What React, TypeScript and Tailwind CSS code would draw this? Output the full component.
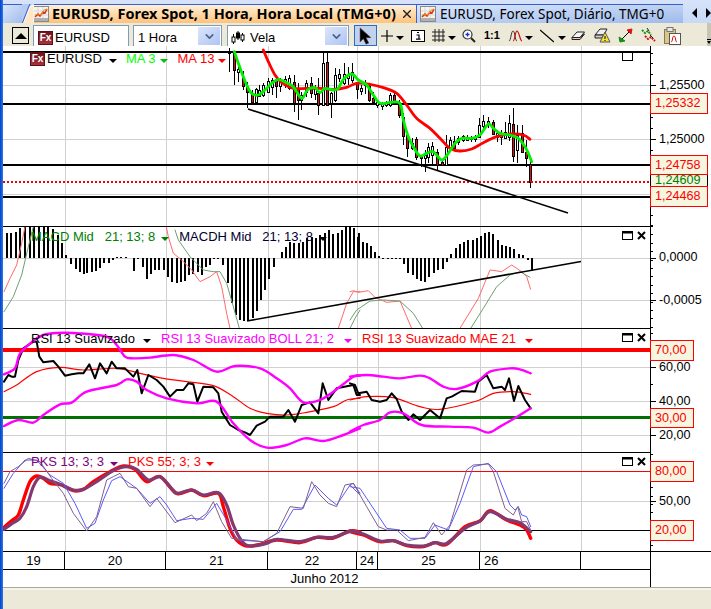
import { ChevronDown } from "lucide-react";

// zoom crop coordinates -> page coordinates
const toPts = (ox: number, oy: number, s: string) =>
  s
    .split(" ")
    .map((p) => {
      const [a, b] = p.split(",");
      return `${ox + Number(a) / 3},${oy + Number(b) / 3}`;
    })
    .join(" ");

const pairs = (ox: number, oy: number, s: string) =>
  s.split(" ").map((p) => {
    const [a, b] = p.split(",");
    return [ox + Number(a) / 3, oy + Number(b) / 3];
  });

// polyline points -> rounded path, for the moving averages
const smooth = (p: string) => {
  const a = p.split(" ").map((s) => s.split(",").map(Number));
  let d = `M${a[0][0]} ${a[0][1]}`;
  for (let i = 0; i < a.length - 1; i++) {
    const p0 = a[i - 1] || a[i];
    const p1 = a[i];
    const p2 = a[i + 1];
    const p3 = a[i + 2] || p2;
    d += ` C${p1[0] + (p2[0] - p0[0]) / 6} ${p1[1] + (p2[1] - p0[1]) / 6} ${p2[0] - (p3[0] - p1[0]) / 6} ${p2[1] - (p3[1] - p1[1]) / 6} ${p2[0]} ${p2[1]}`;
  }
  return d;
};

// x, high, low, body top, body bottom, red
const candles: [number, number, number, number, number, number][] = [
  [229, 48, 72, 52, 53, 0], [234, 52, 85, 52, 70, 1], [238, 63, 82, 69, 72, 0], [243, 71, 90, 78, 86, 1],
  [247, 82, 108, 86, 92, 1], [252, 90, 103, 93, 102, 1], [256, 88, 103, 89, 102, 0], [259, 85, 97, 90, 96, 0],
  [263, 83, 97, 85, 95, 0], [268, 78, 93, 81, 92, 0], [272, 78, 95, 80, 87, 0], [276, 77, 98, 80, 86, 1],
  [280, 78, 92, 80, 86, 0], [285, 76, 88, 79, 85, 0], [289, 75, 90, 78, 88, 0], [294, 75, 112, 82, 103, 1],
  [298, 83, 120, 88, 100, 1], [301, 92, 110, 95, 100, 0], [306, 80, 97, 83, 92, 0], [311, 77, 98, 83, 93, 1],
  [315, 85, 100, 87, 94, 0], [318, 78, 115, 93, 105, 1], [323, 53, 105, 63, 105, 0], [327, 53, 105, 62, 105, 1],
  [331, 92, 118, 93, 103, 0], [335, 68, 102, 75, 100, 0], [339, 69, 82, 74, 78, 0], [344, 63, 85, 74, 83, 0],
  [348, 67, 85, 74, 78, 0], [352, 63, 83, 72, 80, 0], [357, 82, 99, 83, 89, 1], [361, 85, 95, 88, 91, 0],
  [365, 80, 94, 83, 85, 0], [369, 85, 102, 86, 100, 1], [373, 92, 103, 98, 102, 1], [377, 100, 108, 102, 105, 0],
  [382, 102, 110, 104, 106, 0], [386, 101, 107, 103, 105, 0], [390, 93, 107, 95, 105, 0], [394, 92, 103, 95, 102, 1],
  [399, 100, 118, 102, 115, 1], [403, 113, 145, 117, 136, 1], [407, 133, 157, 135, 148, 1], [412, 138, 150, 143, 148, 0],
  [416, 137, 160, 139, 157, 1], [421, 155, 167, 156, 158, 1], [425, 150, 172, 155, 158, 0], [428, 143, 163, 147, 157, 0],
  [432, 142, 165, 146, 155, 0], [437, 149, 171, 152, 165, 1], [442, 160, 165, 162, 165, 1], [446, 135, 165, 147, 165, 0],
  [450, 137, 150, 140, 147, 0], [454, 136, 150, 141, 148, 1], [458, 136, 145, 138, 142, 0], [463, 135, 142, 136, 140, 0],
  [467, 135, 141, 137, 140, 0], [471, 136, 142, 138, 139, 0], [475, 135, 142, 137, 139, 0], [479, 118, 138, 125, 137, 0],
  [483, 115, 130, 121, 126, 0], [488, 117, 128, 121, 124, 0], [493, 120, 135, 122, 134, 1], [497, 130, 142, 133, 137, 0],
  [501, 130, 145, 133, 137, 0], [505, 122, 139, 132, 138, 0], [509, 115, 141, 123, 137, 0], [513, 108, 162, 124, 156, 1],
  [517, 125, 163, 135, 150, 0], [522, 125, 152, 133, 152, 1], [526, 140, 167, 152, 158, 1], [530, 158, 188, 164, 182, 1],
];

const maGreen = toPts(200, 50, "103,5 115,40 128,75 140,105 155,130 175,135 195,120 215,100 235,88 260,98 280,110 305,145 322,120 345,113 360,128 375,115 400,120 415,115 430,88 455,72 475,90 500,105 520,135 540,160 570,157 600,160 610,210 625,260 640,290 660,318 680,310 700,305 725,330 745,310 765,280 785,265 815,265 840,255 865,222 880,235 900,250 930,255 955,265 975,290 985,310 995,335");
const maRed = toPts(200, 50, "190,0 205,35 225,75 245,98 280,115 320,115 360,115 400,118 440,112 470,100 510,103 550,113 590,130 620,165 650,205 690,235 720,265 750,295 780,303 815,297 850,278 890,260 930,252 970,255 990,268");

const macdBars = [
  ...pairs(0, 220, "17,40 31,38 45,35 58,25 72,20 86,20 100,20 114,20 128,20 142,20 156,28 170,45 183,70 195,105 210,132 224,148 238,155 248,162 258,158 272,155 285,152 298,145 310,130 323,128 337,120 347,110 360,112 375,110 398,152 412,118 425,140 438,177 450,162 463,150 475,150 488,150 502,172 514,185 527,188 540,185 552,183 565,165 577,162 590,155 603,165 615,140 628,135 640,118 652,115 665,135 680,190 692,250 705,285 718,300 730,303 742,303 755,295 768,272 780,240 792,210 805,178 818,140 843,95 855,80 868,65 880,68 893,70 905,65 918,55 932,50 945,55 958,45 972,40 985,30 997,42 1010,38 1022,30 1035,22 1048,22 1060,25 1073,40"),
  ...pairs(350, 220, "10,25 22,50 35,65 47,68 60,78 72,95 85,108 97,118 110,118 122,115 135,115 148,115 160,133 172,158 185,165 198,178 210,182 223,185 235,170 248,160 262,150 275,147 288,125 300,102 315,85 327,73 340,65 352,60 365,60 378,55 390,48 402,38 414,35 427,42 440,60 452,75 465,78 478,80 490,88 503,102 515,105 530,120 543,152"),
];

const macdLines = [
  { c: "#ff6a6a", p: toPts(0, 220, "12,215 30,175 50,135 65,70 75,20 80,0") },
  { c: "#6f9f72", p: toPts(0, 220, "12,275 40,230 65,165 85,80 100,20 105,0") },
  { c: "#ff6a6a", p: toPts(0, 220, "495,0 505,50 520,100 545,120 575,150 600,185 630,170 650,155 665,200 680,280 690,325") },
  { c: "#6f9f72", p: toPts(0, 220, "525,30 535,60 570,110 610,150 640,155 660,155 680,190 700,260 718,325") },
  { c: "#ff6a6a", p: toPts(0, 220, "1015,325 1040,250 1060,215 1080,215") },
  { c: "#6f9f72", p: toPts(0, 220, "1050,325 1065,295 1080,270") },
  { c: "#ff6a6a", p: toPts(350, 220, "0,215 10,212 25,217 55,212 75,232 110,247 150,243 170,290 185,325") },
  { c: "#6f9f72", p: toPts(350, 220, "0,300 20,270 60,243 100,240 150,243 190,280 218,325") },
  { c: "#ff6a6a", p: toPts(350, 220, "330,325 385,235 420,150 435,152 455,155 485,135 515,155 530,170 542,208") },
  { c: "#6f9f72", p: toPts(350, 220, "362,325 400,265 440,200 480,165 510,155 540,172") },
];

const rsiBlack = toPts(0, 325, "12,170 25,150 35,155 45,155 55,105 70,70 100,50 110,50 118,95 130,112 160,108 175,125 195,152 215,148 235,145 250,145 268,118 285,160 300,115 320,145 335,110 350,130 375,130 400,155 412,135 425,205 445,150 470,165 490,185 510,215 530,195 550,195 565,175 580,178 592,230 610,185 640,187 655,205 665,260 690,300 715,315 735,322 750,330 770,302 795,290 810,275 850,275 865,255 885,290 905,240 930,232 955,265 968,175 985,225 1010,190 1060,180 1070,210 1080,210");
const rsiBlack2 = toPts(350, 325, "0,175 15,180 25,205 50,200 65,225 90,230 110,225 125,205 140,222 155,260 175,285 190,268 210,285 240,255 270,280 290,220 305,215 335,198 375,200 385,170 410,150 430,190 455,185 465,195 477,160 492,228 505,183 525,225 542,250");
const rsiTop = toPts(0, 325, "12,148 45,130 60,85 100,48 130,30 170,24 240,25 320,35 350,60 375,95 400,100 450,98 520,90 580,105 650,140 705,123 780,130 830,160 870,190 910,232 960,225 1000,200 1060,155 1080,152");
const rsiTop2 = toPts(350, 325, "0,155 50,150 100,155 150,160 210,152 240,160 280,185 320,192 380,170 420,140 480,130 510,133 542,145");
const rsiLow = toPts(0, 325, "12,303 55,285 100,293 130,270 180,238 215,233 260,200 350,180 380,163 410,170 440,195 500,220 590,235 650,230 700,295 750,345 800,368 860,360 915,340 970,348 1030,330 1080,310");
const rsiLow2 = toPts(350, 325, "0,320 40,300 90,285 120,262 160,265 215,300 300,305 370,308 415,323 450,305 490,282 542,250");
const rsiMid = toPts(0, 325, "12,200 50,180 110,140 180,127 250,135 350,130 420,145 490,160 560,170 640,182 700,215 750,250 800,265 860,270 920,262 1000,245 1040,225 1080,220");
const rsiMid2 = toPts(350, 325, "0,225 50,215 130,218 210,245 270,253 380,228 430,205 490,200 542,208");

const pksRed = toPts(0, 450, "12,232 35,212 55,195 70,150 90,95 110,78 130,85 150,100 185,105 220,122 250,118 280,95 330,65 370,48 405,58 440,95 480,80 530,130 575,120 610,137 655,130 670,170 690,235 710,270 740,288 780,283 830,270 900,278 950,262 1000,264 1050,243 1080,246");
const pksRed2 = toPts(350, 450, "0,245 40,255 90,275 130,272 170,287 220,290 255,278 290,283 345,230 390,213 420,182 470,210 510,225 530,240 542,265");
const pksPlum = toPts(0, 450, "12,238 40,218 60,205 80,170 100,110 120,82 150,92 180,103 220,120 250,118 290,95 340,62 380,50 410,58 445,90 480,80 510,110 530,130 575,120 610,135 655,128 680,165 700,225 725,272 750,288 800,280 830,268 900,275 950,262 1000,262 1050,244 1080,248");
const pksPlum2 = toPts(350, 450, "0,243 40,252 90,273 130,272 170,285 220,288 255,278 290,280 345,235 390,213 420,185 470,208 510,218 542,245");
const pksBlue = toPts(0, 450, "12,115 40,70 75,30 110,30 150,75 190,100 225,160 260,235 285,220 310,150 335,92 360,80 410,115 450,160 480,140 500,165 530,212 575,205 610,208 650,160 680,210 710,270 790,275 840,245 880,178 905,178 945,105 985,145 1010,165 1050,105 1080,135");
const pksBlue2 = toPts(350, 450, "0,110 30,115 50,145 110,235 150,240 180,265 225,265 255,225 295,240 330,160 370,50 415,40 440,65 480,165 495,180 505,170 515,195 530,200 542,230");
const pksThin = toPts(0, 450, "12,100 30,65 55,50 85,25 120,35 155,85 190,130 220,190 260,243 290,200 320,90 340,80 360,70 385,110 410,115 450,170 470,145 525,218 575,195 590,212 620,190 640,155 665,215 695,265 790,275 830,250 870,170 910,175 935,95 960,135 985,160 1010,170 1035,105 1060,100 1080,130");
const pksThin2 = toPts(350, 450, "0,105 10,100 50,170 85,230 110,240 140,240 175,272 225,262 250,218 275,255 300,225 350,60 370,45 415,42 430,65 465,175 490,195 503,170 515,215 530,215 542,240");

const gridX = [65, 166, 268, 357, 378, 480, 581];

function Grid({ top, bottom, rows }: { top: number; bottom: number; rows: number[] }) {
  return (
    <g stroke="#d0d0d0" strokeWidth="1" shapeRendering="crispEdges">
      {gridX.map((x) => (
        <line key={x} x1={x + 0.5} x2={x + 0.5} y1={top} y2={bottom} />
      ))}
      {rows.map((y) => (
        <line key={y} x1={3} x2={650} y1={y + 0.5} y2={y + 0.5} />
      ))}
    </g>
  );
}

function Line({ p, c, w }: { p: string; c: string; w: number }) {
  return <polyline points={p} fill="none" stroke={c} strokeWidth={w} strokeLinejoin="round" strokeLinecap="round" />;
}

function Curve({ p, c, w }: { p: string; c: string; w: number }) {
  return <path d={smooth(p)} fill="none" stroke={c} strokeWidth={w} strokeLinejoin="round" strokeLinecap="round" />;
}

function Caret({ color }: { color: string }) {
  return <span className="inline-block w-0 h-0 border-x-[4px] border-t-[4px] border-x-transparent" style={{ borderTopColor: color }} />;
}

function FxIcon() {
  return (
    <span className="flex items-center justify-center w-[15px] h-[14px] bg-gradient-to-b from-[#6e1420] to-[#a8323c] text-white text-[10px] leading-none font-bold border border-[#5c1018]">
      Fx
    </span>
  );
}

function WinIcons() {
  return (
    <svg className="absolute left-[619px] top-[4px]" width="26" height="10" viewBox="0 0 26 10">
      <rect x="0.5" y="0.5" width="10" height="8" fill="white" stroke="black" />
      <rect x="0.5" y="0.5" width="10" height="2" fill="black" />
      <path d="M16 1l7 7M23 1l-7 7" stroke="black" strokeWidth="2" />
    </svg>
  );
}

function AxisText({ top, y, text }: { top: number; y: number; text: string }) {
  return (
    <span className="absolute left-[8px] text-[12.6px] leading-[14px] text-black whitespace-nowrap" style={{ top: y - top - 7 }}>
      {text}
    </span>
  );
}

function AxisBox({ top, y, h, w, text, color = "red" }: { top: number; y: number; h: number; w: number; text: string; color?: string }) {
  const green = color === "green";
  return (
    <span
      className={
        "absolute left-[-1px] border bg-[#f5f5e0] text-[12.6px] pl-[4px] flex items-center overflow-hidden whitespace-nowrap " +
        (green ? "border-black text-[#008000]" : "border-[#ff0000] text-[#ff0000]")
      }
      style={{ top: y - top, height: h, width: w }}
    >
      {text}
    </span>
  );
}

function Ticks({ top, h, major, minor }: { top: number; h: number; major: number[]; minor: number[] }) {
  return (
    <svg className="block w-[60px]" style={{ height: h }} viewBox={`0 ${top} 60 ${h}`} shapeRendering="crispEdges">
      {minor.map((y) => (
        <line key={y} x1="0" x2="2" y1={Math.round(y) + 0.5} y2={Math.round(y) + 0.5} stroke="black" />
      ))}
      {major.map((y) => (
        <line key={y} x1="0" x2="5" y1={y + 0.5} y2={y + 0.5} stroke="black" />
      ))}
    </svg>
  );
}

const range = (from: number, to: number, step: number) => {
  const out: number[] = [];
  for (let y = from; y < to; y += step) out.push(y);
  return out;
};

function TabIcon() {
  return (
    <svg width="16" height="16" viewBox="0 0 16 16" className="shrink-0">
      <rect x="0.5" y="0.5" width="15" height="15" fill="#f4f4f0" stroke="#8a8a8a" />
      <path d="M1 5h14M1 9h14M5 1v11M10 1v11" stroke="#d8d8d8" />
      <path d="M2 11l3-3 2 2 3-4 2 1 2-4" fill="none" stroke="#e03020" strokeWidth="1.6" />
      <path d="M2 9l3-1 3 1 3-5 3-1" fill="none" stroke="#e8a020" strokeWidth="1" />
      <rect x="1" y="12" width="14" height="3" fill="#b0b0b0" />
    </svg>
  );
}

function Combo({ children, button = true, cls }: { children: React.ReactNode; button?: boolean; cls: string }) {
  return (
    <div className={"flex h-[21px] border border-b-0 border-[#7f9db9] bg-white text-[13px] text-black " + cls}>
      <div className="flex flex-1 items-center pt-[3px] min-w-0">{children}</div>
      {button && (
        <div className="flex w-[22px] items-center justify-center my-px mr-px bg-gradient-to-br from-[#dce6fb] to-[#aec4f4]">
          <ChevronDown size={13} strokeWidth={3} color="#4d6185" />
        </div>
      )}
    </div>
  );
}

function Toolbar() {
  return (
    <div className="flex h-[23px] items-end bg-[#ece9d8] overflow-hidden relative">
      <div className="ml-[9px] mb-[2px] flex h-[17px] w-[17px] items-center justify-center border border-black">
        <span className="w-0 h-0 border-x-[6px] border-b-[6px] border-x-transparent border-b-black" />
      </div>
      <div className="flex ml-[4px] gap-[4px] items-end">
        <Combo button={false} cls="w-[96px]">
          <span className="ml-[4px] mr-[2px]"><FxIcon /></span>
          EURUSD
        </Combo>
        <Combo cls="w-[89px]">
          <span className="ml-[4px]">1 Hora</span>
        </Combo>
        <div className="ml-[1px]">
          <Combo cls="w-[122px]">
            <svg width="14" height="14" viewBox="0 0 14 14" className="ml-[3px]">
              <path d="M2.5 3v10M7 0v9M11.5 2v9" stroke="black" />
              <rect x="1" y="6" width="3" height="5" fill="white" stroke="black" />
              <rect x="5.5" y="2" width="3" height="5" fill="black" stroke="black" />
              <rect x="10" y="4" width="3" height="5" fill="white" stroke="black" />
            </svg>
            <span className="ml-[5px]">Vela</span>
          </Combo>
        </div>
      </div>

      <div className="ml-[5px] mb-0 flex h-[21px] w-[23px] items-center justify-center border border-[#316ac5] bg-[#c1d2ee]">
        <svg width="13" height="18" viewBox="0 0 12 16">
          <path d="M1 0.5v13l3-3 2.5 5 2.5-1-2.5-5h4.5z" fill="black" stroke="#444" strokeWidth="0.5" />
        </svg>
      </div>
      <div className="flex items-center h-[21px] text-black">
        <svg width="14" height="14" viewBox="0 0 14 14" className="ml-[3px]"><path d="M7 1v12M1 7h12" stroke="black" strokeWidth="1.2" /></svg>
        <span className="ml-[2px]"><Caret color="black" /></span>
        <svg width="14" height="12" viewBox="0 0 14 12" className="ml-[7px]"><rect x="0.5" y="0.5" width="13" height="11" fill="white" stroke="black" /><path d="M6 2.5h2M5.5 5h2.5v4M5 9.2h4.5" stroke="black" strokeWidth="1.2" fill="none" /></svg>
        <svg width="13" height="13" viewBox="0 0 13 13" className="ml-[7px]"><path d="M3 0v13M7 0v13M11 0v13M0 3h13M0 7h13M0 11h13" stroke="#222" /></svg>
        <span className="ml-[3px]"><Caret color="black" /></span>
        <svg width="14" height="14" viewBox="0 0 14 14" className="ml-[6px]">
          <circle cx="5.5" cy="5.5" r="4.5" fill="white" stroke="#333" strokeWidth="1.2" />
          <path d="M5.5 3.5v4M3.5 5.5h4" stroke="#1030d0" strokeWidth="1.3" />
          <path d="M9 9l4 4" stroke="#222" strokeWidth="2" />
        </svg>
        <span className="ml-[8px] w-[17px] text-[11px] font-bold leading-none font-['Liberation_Sans',sans-serif]">1:1</span>
        <svg width="15" height="13" viewBox="0 0 15 13" className="ml-[7px]">
          <path d="M1 12C3 12 3 2 5 2s2 10 4 10" fill="none" stroke="#333" strokeWidth="1" />
          <path d="M5 12C7 12 7 2 9 2s3 10 5 10" fill="none" stroke="#d01010" strokeWidth="1.2" />
        </svg>
        <span className="ml-[2px]"><Caret color="black" /></span>
        <svg width="14" height="14" viewBox="0 0 14 14" className="ml-[7px]"><path d="M0 1l14 12" stroke="black" strokeWidth="1.3" /></svg>
        <span className="ml-[4px]"><Caret color="black" /></span>
        <svg width="14" height="11" viewBox="0 0 14 11" className="ml-[5px]">
          <path d="M1 7.5L6 2h7.5L9 7.5z" fill="#f4f4f4" stroke="#222" />
          <path d="M1 7.5v2h8L13.5 4 9 7.5z" fill="#f4c6c6" stroke="#222" />
        </svg>
        <svg width="17" height="17" viewBox="0 0 17 17" className="ml-[9px]">
          <path d="M1 8L6 2h7l-3 6z" fill="#eee" stroke="#222" />
          <path d="M1 8v3h7l2-3z" fill="#ccc" stroke="#222" />
          <path d="M11 5l5 10H6z" fill="#f5e23c" stroke="#555" />
          <path d="M11 9v3M11 13v1" stroke="black" />
        </svg>
        <svg width="15" height="15" viewBox="0 0 15 15" className="ml-[7px]">
          <path d="M2 13L13 2" stroke="black" />
          <path d="M9 2l5-1-1 5z" fill="#e01010" stroke="#e01010" />
          <path d="M1 9l1 5 5-1z" fill="#109010" stroke="#109010" />
        </svg>
        <svg width="16" height="15" viewBox="0 0 16 15" className="ml-[8px]">
          <path d="M1 2l3 3 3-2 3 4" fill="none" stroke="#109010" strokeWidth="2" strokeDasharray="2 1" />
          <path d="M4 8l3 3 3-2 4 4" fill="none" stroke="#d01010" strokeWidth="2" strokeDasharray="2 1" />
          <path d="M6 0l2 3M9 7l3 3" stroke="#222" />
        </svg>
        <svg width="17" height="18" viewBox="0 0 17 18" className="ml-[7px]">
          <rect x="0.5" y="2.5" width="11" height="14" fill="#d8c88a" stroke="#8a7a50" />
          <rect x="3" y="0.5" width="6" height="4" fill="#e8e8e8" stroke="#777" />
          <rect x="5.5" y="6.5" width="11" height="11" fill="white" stroke="#555" />
          <path d="M7 15c2 0 1-6 3-6s1 6 3 6" fill="none" stroke="#d01010" />
        </svg>
      </div>
      <div className="absolute right-0 top-0 bottom-0 w-[4px] bg-[#c8c5b4] flex flex-col items-center justify-end pb-[2px] gap-[1px]">
        <span className="w-[4px] h-px bg-black" />
        <span className="w-0 h-0 border-x-[2px] border-t-[3px] border-x-transparent border-t-black" />
      </div>
    </div>
  );
}

function Tabs() {
  return (
    <div className="relative flex h-[23px] bg-gradient-to-b from-[#d6e3f9] to-[#c8d9f6] font-['Noto_Sans',sans-serif] text-[13.5px] text-black overflow-hidden">
      <div className="w-[19px] h-[19px] mt-[4px] border-t border-[#3a5fcd] bg-gradient-to-br from-[#d8e5fa] to-[#a3bdeb]" />
      <div className="relative flex h-[19px] mt-[4px] w-[394px] items-center border-t border-[#3a5fcd] bg-gradient-to-b from-[#fff0d8] to-[#ffc27a] pl-[11px]">
        <svg className="absolute left-0 top-[-1px]" width="12" height="20" viewBox="0 0 12 20">
          <path d="M0 0H12V20H0z" fill="#b5cbf0" />
          <path d="M1 20L8 3Q9 1 12 1V20z" fill="#ffe6c4" stroke="#fff" />
          <path d="M0 20L7 2 8 0" stroke="#3a5fcd" fill="none" />
        </svg>
        <TabIcon />
        <span className="ml-[3px] font-bold text-[14.5px] whitespace-nowrap">EURUSD, Forex Spot, 1 Hora, Hora Local (TMG+0)</span>
        <svg width="8" height="8" viewBox="0 0 8 8" className="ml-[7px]"><path d="M0 0l8 8M8 0l-8 8" stroke="#222" strokeWidth="1.4" /></svg>
      </div>
      <div className="flex h-[19px] mt-[4px] w-[267px] items-center border-t border-l border-[#3a5fcd] bg-gradient-to-br from-[#dbe7fb] to-[#9fbbeb] pl-[3px]">
        <TabIcon />
        <span className="ml-[4px] whitespace-nowrap">EURUSD, Forex Spot, Diário, TMG+0</span>
      </div>
      <div className="flex flex-1 items-center justify-end gap-[9px] pt-[2px]">
        <span className="w-0 h-0 border-y-[5px] border-r-[5px] border-y-transparent border-r-black" />
        <span className="w-0 h-0 border-y-[5px] border-l-[5px] border-y-transparent border-l-black" />
      </div>
    </div>
  );
}

export default function App() {
  return (
    <div className="flex w-[711px] h-[609px] overflow-hidden bg-[#ece9d8] font-['Liberation_Sans',Arial,sans-serif] text-[13px]">
      <div className="w-[3px] shrink-0 bg-gradient-to-r from-[#0a3fc4] to-[#2a78f0]" />
      <div className="flex flex-1 flex-col min-w-0">
        <Tabs />
        <Toolbar />

        {/* preço */}
        <div className="flex h-[180px] bg-white">
          <div className="relative w-[647px]">
            <svg className="block w-full h-[180px]" viewBox="3 46 647 180">
              <Grid top={46} bottom={226} rows={[85, 139, 194]} />
              <g shapeRendering="crispEdges">
                {[52, 104, 165, 197].map((y) => (
                  <rect key={y} x={3} y={y - 1} width={647} height={2} fill="black" />
                ))}
              </g>
              {candles.map(([x, hi, lo, t, b, red]) => (
                <g key={x} shapeRendering="crispEdges">
                  <line x1={x + 0.5} x2={x + 0.5} y1={hi} y2={lo} stroke="black" />
                  <rect x={x - 0.5} y={t + 0.5} width={2} height={b - t} fill={red ? "#e01010" : "white"} stroke="black" />
                </g>
              ))}
              <Curve p={maRed} c="#ff0000" w={2.8} />
              <Curve p={maGreen} c="#00f000" w={2.8} />
              <line x1={3} x2={650} y1={182} y2={182} stroke="#f00000" strokeWidth="2" strokeDasharray="2 2" shapeRendering="crispEdges" />
              <line x1={248} y1={109} x2={568} y2={213} stroke="black" strokeWidth="1.6" />
            </svg>
            <div className="absolute left-[27px] top-[5px] flex items-center whitespace-nowrap leading-[15px]">
              <FxIcon />
              <span className="ml-[2px] text-black">EURUSD</span>
              <span className="ml-[7px]"><Caret color="black" /></span>
              <span className="ml-[9px] text-[#00ff00]">MA 3</span>
              <span className="ml-[4px]"><Caret color="#00c000" /></span>
              <span className="ml-[10px] text-[#ff0000]">MA 13</span>
              <span className="ml-[4px]"><Caret color="#ff0000" /></span>
            </div>
            <svg className="absolute left-[619px] top-[6px]" width="11" height="9" viewBox="0 0 11 9">
              <rect x="0.5" y="0.5" width="10" height="8" fill="white" stroke="black" />
            </svg>
          </div>
          <div className="relative flex-1 border-l border-black">
            <Ticks top={46} h={180} major={[85, 139, 193]} minor={range(52.6, 226, 10.8)} />
            <AxisText top={46} y={85} text="1,25500" />
            <AxisText top={46} y={139} text="1,25000" />
            <AxisBox top={46} y={93} h={21} w={58} text="1,25332" />
            <AxisBox top={46} y={174} h={13} w={58} text="1,24609" color="green" />
            <AxisBox top={46} y={155} h={20} w={58} text="1,24758" />
            <AxisBox top={46} y={186} h={21} w={58} text="1,24468" />
          </div>
        </div>

        {/* MACD */}
        <div className="flex h-[102px] bg-white">
          <div className="relative w-[647px] border-t border-black">
            <svg className="block w-full h-[101px]" viewBox="3 227 647 101">
              <Grid top={227} bottom={328} rows={[258, 300]} />
              <g shapeRendering="crispEdges">
                {macdBars.map(([x, y]) => (
                  <rect key={x} x={Math.round(x)} width={2} y={Math.min(y, 258)} height={Math.max(Math.abs(258 - y), 1)} fill="black" />
                ))}
              </g>
              {macdLines.map((l, i) => (
                <Line key={i} p={l.p} c={l.c} w={1} />
              ))}
              <line x1={247} y1={321} x2={581} y2={261.5} stroke="black" strokeWidth="1.6" />
            </svg>
            <div className="absolute left-[28px] top-[2px] flex items-center whitespace-pre leading-[15px]">
              <span className="text-[#008000]">MACD Mid   21; 13; 8</span>
              <span className="ml-[6px]"><Caret color="#008000" /></span>
              <span className="ml-[10px] text-[#000030]">MACDH Mid   21; 13; 8</span>
              <span className="ml-[6px]"><Caret color="black" /></span>
            </div>
            <WinIcons />
          </div>
          <div className="relative flex-1 border-l border-black">
            <Ticks top={226} h={102} major={[258, 300]} minor={range(226, 328, 8.4)} />
            <AxisText top={226} y={257} text="0,0000" />
            <AxisText top={226} y={300} text="-0,0005" />
          </div>
        </div>

        {/* RSI */}
        <div className="flex h-[124px] bg-white">
          <div className="relative w-[647px] border-t border-black">
            <svg className="block w-full h-[123px]" viewBox="3 329 647 123">
              <Grid top={329} bottom={452} rows={[367, 401, 435]} />
              <rect x={3} y={348} width={647} height={4} fill="#ff0000" />
              <rect x={3} y={416} width={647} height={3} fill="#007000" />
              <Curve p={rsiMid} c="#ff0000" w={1.2} />
              <Curve p={rsiMid2} c="#ff0000" w={1.2} />
              <Line p={rsiBlack} c="black" w={2} />
              <Line p={rsiBlack2} c="black" w={2} />
              <Curve p={rsiTop} c="#ff00ff" w={2.4} />
              <Curve p={rsiTop2} c="#ff00ff" w={2.4} />
              <Curve p={rsiLow} c="#ff00ff" w={2.4} />
              <Curve p={rsiLow2} c="#ff00ff" w={2.4} />
            </svg>
            <div className="absolute left-[28px] top-[2px] flex items-center whitespace-pre leading-[15px]">
              <span className="text-black">RSI 13 Suavizado</span>
              <span className="ml-[8px]"><Caret color="black" /></span>
              <span className="ml-[10px] text-[#ff00ff]">RSI 13 Suavizado BOLL 21; 2</span>
              <span className="ml-[10px]"><Caret color="#ff00ff" /></span>
              <span className="ml-[10px] text-[#ff0000]">RSI 13 Suavizado MAE 21</span>
              <span className="ml-[9px]"><Caret color="#ff0000" /></span>
            </div>
            <WinIcons />
          </div>
          <div className="relative flex-1 border-l border-black">
            <Ticks top={328} h={124} major={[367, 401, 435]} minor={range(333, 452, 17)} />
            <AxisText top={328} y={367} text="60,00" />
            <AxisText top={328} y={401} text="40,00" />
            <AxisText top={328} y={435} text="20,00" />
            <AxisBox top={328} y={340} h={21} w={44} text="70,00" />
            <AxisBox top={328} y={408} h={20} w={44} text="30,00" />
          </div>
        </div>

        {/* PKS */}
        <div className="flex h-[99px] bg-white">
          <div className="relative w-[647px] border-t border-black">
            <svg className="block w-full h-[98px]" viewBox="3 453 647 98">
              <Grid top={453} bottom={551} rows={[501]} />
              <rect x={3} y={471} width={647} height={1} fill="#ff0000" />
              <rect x={3} y={530} width={647} height={1} fill="black" />
              <Curve p={pksRed} c="#ff0000" w={3.4} />
              <Curve p={pksRed2} c="#ff0000" w={3.4} />
              <Curve p={pksPlum} c="#843a70" w={3.2} />
              <Curve p={pksPlum2} c="#843a70" w={3.2} />
              <Line p={pksBlue} c="#5a5aff" w={1} />
              <Line p={pksBlue2} c="#5a5aff" w={1} />
              <Line p={pksThin} c="#80608a" w={1} />
              <Line p={pksThin2} c="#80608a" w={1} />
            </svg>
            <div className="absolute left-[28px] top-[1px] flex items-center whitespace-pre leading-[15px]">
              <span className="text-[#800080]">PKS 13; 3; 3</span>
              <span className="ml-[6px]"><Caret color="#800080" /></span>
              <span className="ml-[10px] text-[#ff0000]">PKS 55; 3; 3</span>
              <span className="ml-[5px]"><Caret color="#ff0000" /></span>
            </div>
            <WinIcons />
          </div>
          <div className="relative flex-1 border-l border-black">
            <Ticks top={452} h={99} major={[501]} minor={range(454, 551, 8.3)} />
            <AxisText top={452} y={501} text="50,00" />
            <AxisBox top={452} y={461} h={21} w={44} text="80,00" />
            <AxisBox top={452} y={520} h={21} w={44} text="20,00" />
          </div>
        </div>

        {/* escala de tempo */}
        <div className="flex h-[36px] bg-white text-[13px] leading-[17px] text-black border-t border-black">
          <div className="w-[647px] flex flex-col">
            <div className="flex h-[18px] border-b border-black">
              <div className="w-[62px] border-r border-black text-center">19</div>
              <div className="w-[101px] border-r border-black text-center">20</div>
              <div className="w-[102px] border-r border-black text-center">21</div>
              <div className="w-[89px] border-r border-black text-center">22</div>
              <div className="w-[21px] border-r border-black text-center">24</div>
              <div className="w-[102px] border-r border-black text-center">25</div>
              <div className="w-[101px] border-r border-black pl-[4px]">26</div>
              <div className="flex-1" />
            </div>
            <div className="flex-1 text-center pr-[4px]">Junho 2012</div>
          </div>
          <div className="flex-1 border-l border-black" />
        </div>

        <div className="h-px bg-[#aca899]" />
        <div className="h-[2px] bg-[#f5f4ea]" />
        <div className="flex-1" />
      </div>
    </div>
  );
}
